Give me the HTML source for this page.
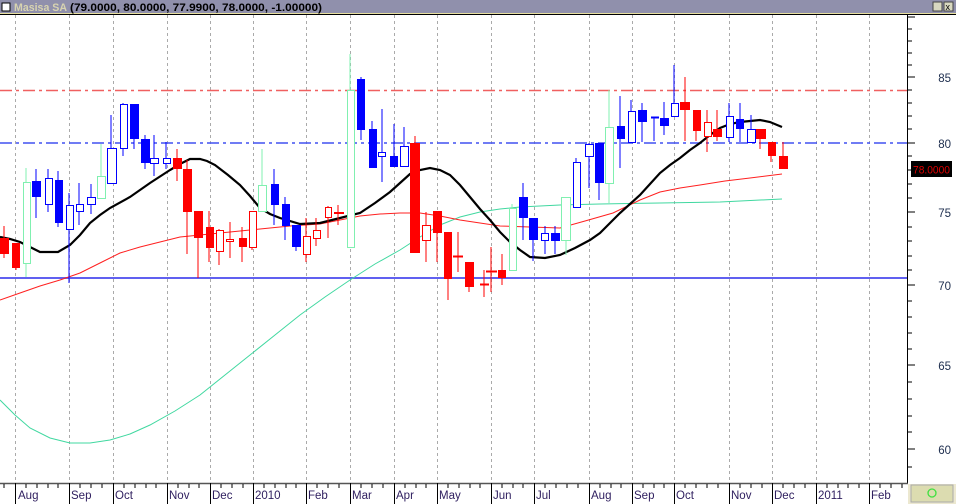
<!DOCTYPE html>
<html><head><meta charset="utf-8"><style>
html,body{margin:0;padding:0;width:956px;height:504px;overflow:hidden;background:#fff;font-family:"Liberation Sans",sans-serif}
svg{display:block}
.b{fill:#0000ff;stroke:#0000ff}.bh{fill:#fff;stroke:#0000ff}
.r{fill:#ff0000;stroke:#ff0000}.rh{fill:#fff;stroke:#ff0000}
.g{fill:#fff;stroke:#80f0b0}
.wb{stroke:#0000ff}.wr{stroke:#ff0000}.wg{stroke:#80f0b0}
text{font-family:"Liberation Sans",sans-serif}
</style></head><body>
<svg width="956" height="504" viewBox="0 0 956 504" xmlns="http://www.w3.org/2000/svg">
<rect x="0" y="0" width="956" height="13" fill="#9090ac"/>
<rect x="0" y="13" width="956" height="1" fill="#e8e0a0"/>
<rect x="0" y="14" width="956" height="1" fill="#000"/>
<rect x="2" y="3" width="8" height="8" fill="#fff" stroke="#000" stroke-width="1"/>
<text x="14" y="11" font-size="11" font-weight="bold" fill="#d8d4b0" textLength="53" lengthAdjust="spacingAndGlyphs">Masisa SA</text>
<text x="70" y="11" font-size="11" font-weight="bold" fill="#000" textLength="252" lengthAdjust="spacingAndGlyphs">(79.0000, 80.0000, 77.9900, 78.0000, -1.00000)</text>
<rect x="933" y="2" width="9" height="9" fill="#d8d8c0" stroke="#444"/>
<rect x="944" y="2" width="9" height="9" fill="#d8d8c0" stroke="#444"/>
<text x="945.5" y="10" font-size="9" fill="#000">x</text>
<g stroke="#aaa" stroke-dasharray="3,3" stroke-width="1">
<line x1="15.5" y1="15" x2="15.5" y2="483"/><line x1="69.5" y1="15" x2="69.5" y2="483"/><line x1="113.5" y1="15" x2="113.5" y2="483"/><line x1="167.5" y1="15" x2="167.5" y2="483"/><line x1="210.5" y1="15" x2="210.5" y2="483"/><line x1="253.5" y1="15" x2="253.5" y2="483"/><line x1="306.5" y1="15" x2="306.5" y2="483"/><line x1="350.5" y1="15" x2="350.5" y2="483"/><line x1="394.5" y1="15" x2="394.5" y2="483"/><line x1="437.5" y1="15" x2="437.5" y2="483"/><line x1="491.5" y1="15" x2="491.5" y2="483"/><line x1="534.5" y1="15" x2="534.5" y2="483"/><line x1="589.5" y1="15" x2="589.5" y2="483"/><line x1="632.5" y1="15" x2="632.5" y2="483"/><line x1="674.5" y1="15" x2="674.5" y2="483"/><line x1="729.5" y1="15" x2="729.5" y2="483"/><line x1="772.5" y1="15" x2="772.5" y2="483"/><line x1="816.5" y1="15" x2="816.5" y2="483"/><line x1="869.5" y1="15" x2="869.5" y2="483"/>
</g>
<line x1="0" y1="90.5" x2="907" y2="90.5" stroke="#f06060" stroke-width="1.5" stroke-dasharray="12,4,3,4"/>
<line x1="0" y1="143" x2="907" y2="143" stroke="#4050f0" stroke-width="1.5" stroke-dasharray="12,4,3,4"/>
<line x1="0" y1="278" x2="907" y2="278" stroke="#6060f0" stroke-width="2"/>
<polyline fill="none" stroke="#40d8a0" stroke-width="1" points="0,400 15,415 30,428 50,438 70,443 90,443 110,440 130,434 150,425 175,411 200,395 225,375 250,355 275,335 300,315 325,297 350,280 375,264 400,250 420,237 440,225 460,217 480,212 500,209 520,207 560,205 600,204 660,203 720,202 782,199"/>
<polyline fill="none" stroke="#ff2020" stroke-width="1" points="0,300 20,293 40,286 60,280 80,273 100,263 120,253 140,247 160,242 180,237 200,235 230,232 260,229 290,226 320,224 340,220 360,216 380,214 400,213 420,213 440,216 460,220 480,223 500,226 530,227 560,228 585,221 613,213 640,200 660,192 680,188 700,185 725,181 750,178 782,174"/>
<polyline fill="none" stroke="#000" stroke-width="2.2" points="0,237 10,239 20,242 30,247 40,252 58,252 70,245 80,235 90,223 100,215 110,208 130,197 150,183 170,170 180,164 190,159 200,159 207,161 215,165 228,175 240,185 250,196 260,208 270,214 280,218 300,224 320,223 340,218 360,213 375,203 390,192 400,183 410,174 420,170 430,168 440,170 450,175 460,185 470,197 480,209 490,220 500,232 510,242 520,250 530,257 545,258 560,255 575,248 590,240 600,233 610,223 620,213 630,204 640,195 650,184 660,173 670,165 680,158 690,150 700,143 710,135 720,128 730,124 740,122 760,120 770,122 782,127"/>
<g stroke-width="1">
<line class="wr" x1="4" y1="226" x2="4" y2="258"/><rect class="r" x="0.5" y="238.5" width="8" height="15"/>
<line class="wr" x1="16" y1="243" x2="16" y2="270"/><rect class="r" x="12.5" y="243.5" width="7" height="24"/>
<line class="wg" x1="26" y1="168" x2="26" y2="277"/><rect class="g" x="23.5" y="182.5" width="7" height="81"/>
<line class="wb" x1="36" y1="169" x2="36" y2="218"/><rect class="b" x="32.5" y="181.5" width="8" height="15"/>
<line class="wb" x1="48" y1="169" x2="48" y2="212"/><rect class="bh" x="45.5" y="178.5" width="7" height="26"/>
<line class="wb" x1="58" y1="171" x2="58" y2="227"/><rect class="b" x="55.5" y="180.5" width="7" height="42"/>
<line class="wb" x1="69" y1="193" x2="69" y2="283"/><rect class="bh" x="66.5" y="205.5" width="7" height="24"/>
<line class="wb" x1="79" y1="183" x2="79" y2="225"/><rect class="bh" x="76.5" y="204.5" width="7" height="7"/>
<line class="wb" x1="91" y1="184" x2="91" y2="214"/><rect class="bh" x="87.5" y="197.5" width="8" height="7"/>
<line class="wg" x1="101" y1="144" x2="101" y2="198"/><rect class="g" x="97.5" y="176.5" width="8" height="22"/>
<line class="wb" x1="111" y1="115" x2="111" y2="183"/><rect class="bh" x="107.5" y="148.5" width="9" height="35"/>
<line class="wb" x1="123" y1="103" x2="123" y2="156"/><rect class="bh" x="120.5" y="104.5" width="7" height="44"/>
<line class="wb" x1="134" y1="104" x2="134" y2="149"/><rect class="b" x="130.5" y="104.5" width="8" height="34"/>
<line class="wb" x1="145" y1="135" x2="145" y2="169"/><rect class="b" x="141.5" y="139.5" width="8" height="23"/>
<line class="wb" x1="154" y1="135" x2="154" y2="176"/><rect class="bh" x="150.5" y="158.5" width="8" height="5"/>
<line class="wb" x1="166" y1="142" x2="166" y2="169"/><rect class="bh" x="163.5" y="158.5" width="7" height="5"/>
<line class="wr" x1="177" y1="149" x2="177" y2="181"/><rect class="r" x="173.5" y="158.5" width="8" height="10"/>
<line class="wr" x1="187" y1="160" x2="187" y2="254"/><rect class="r" x="183.5" y="169.5" width="8" height="42"/>
<line class="wr" x1="198" y1="211" x2="198" y2="278"/><rect class="r" x="194.5" y="211.5" width="8" height="26"/>
<line class="wr" x1="209" y1="211" x2="209" y2="262"/><rect class="r" x="206.5" y="227.5" width="7" height="20"/>
<line class="wr" x1="219" y1="229" x2="219" y2="265"/><rect class="rh" x="216.5" y="230.5" width="7" height="21"/>
<line class="wr" x1="230" y1="222" x2="230" y2="258"/><rect class="rh" x="226.5" y="239.5" width="7" height="2"/>
<line class="wr" x1="242" y1="227" x2="242" y2="262"/><rect class="r" x="239.5" y="238.5" width="7" height="8"/>
<line class="wr" x1="252" y1="211" x2="252" y2="250"/><rect class="rh" x="249.5" y="211.5" width="7" height="36"/>
<line class="wg" x1="262" y1="149" x2="262" y2="212"/><rect class="g" x="258.5" y="185.5" width="8" height="26"/>
<line class="wb" x1="274" y1="169" x2="274" y2="225"/><rect class="b" x="271.5" y="184.5" width="7" height="20"/>
<line class="wb" x1="285" y1="197" x2="285" y2="240"/><rect class="b" x="282.5" y="204.5" width="7" height="21"/>
<line class="wb" x1="296" y1="225" x2="296" y2="251"/><rect class="b" x="292.5" y="225.5" width="8" height="21"/>
<line class="wr" x1="306" y1="218" x2="306" y2="262"/><rect class="rh" x="303.5" y="236.5" width="7" height="18"/>
<line class="wr" x1="316" y1="218" x2="316" y2="246"/><rect class="rh" x="313.5" y="230.5" width="7" height="8"/>
<line class="wr" x1="328" y1="206" x2="328" y2="238"/><rect class="rh" x="325.5" y="207.5" width="6" height="10"/>
<line class="wr" x1="338" y1="205" x2="338" y2="225"/><rect class="r" x="334.5" y="212.5" width="9" height="1"/>
<line class="wg" x1="350" y1="54" x2="350" y2="247"/><rect class="g" x="347.5" y="90.5" width="7" height="157"/>
<line class="wb" x1="361" y1="77" x2="361" y2="140"/><rect class="b" x="357.5" y="79.5" width="7" height="50"/>
<line class="wb" x1="372" y1="121" x2="372" y2="167"/><rect class="b" x="369.5" y="129.5" width="7" height="38"/>
<line class="wb" x1="382" y1="109" x2="382" y2="182"/><rect class="bh" x="378.5" y="152.5" width="7" height="4"/>
<line class="wb" x1="394" y1="124" x2="394" y2="166"/><rect class="b" x="390.5" y="156.5" width="7" height="10"/>
<line class="wb" x1="404" y1="127" x2="404" y2="166"/><rect class="bh" x="400.5" y="146.5" width="8" height="20"/>
<line class="wr" x1="415" y1="136" x2="415" y2="253"/><rect class="r" x="410.5" y="143.5" width="9" height="109"/>
<line class="wr" x1="426" y1="212" x2="426" y2="262"/><rect class="rh" x="422.5" y="225.5" width="8" height="15"/>
<line class="wr" x1="437" y1="211" x2="437" y2="262"/><rect class="r" x="433.5" y="211.5" width="8" height="21"/>
<line class="wr" x1="448" y1="232" x2="448" y2="300"/><rect class="r" x="444.5" y="232.5" width="7" height="46"/>
<line class="wr" x1="458" y1="232" x2="458" y2="272"/><rect class="r" x="453.5" y="256" width="9" height="1"/>
<line class="wr" x1="469" y1="262" x2="469" y2="292"/><rect class="r" x="465.5" y="262.5" width="8" height="24"/>
<line class="wr" x1="484" y1="270" x2="484" y2="297"/><rect class="r" x="480.5" y="284" width="8" height="1"/>
<line class="wr" x1="491" y1="247" x2="491" y2="292"/><rect class="r" x="486.5" y="271" width="10" height="1"/>
<line class="wr" x1="502" y1="254" x2="502" y2="285"/><rect class="r" x="498.5" y="270.5" width="7" height="7"/>
<line class="wg" x1="512" y1="204" x2="512" y2="270"/><rect class="g" x="509.5" y="208.5" width="7" height="62"/>
<line class="wb" x1="523" y1="183" x2="523" y2="240"/><rect class="b" x="519.5" y="197.5" width="8" height="20"/>
<line class="wb" x1="533" y1="218" x2="533" y2="261"/><rect class="b" x="529.5" y="218.5" width="8" height="21"/>
<line class="wb" x1="545" y1="226" x2="545" y2="254"/><rect class="bh" x="541.5" y="233.5" width="7" height="7"/>
<line class="wb" x1="555" y1="226" x2="555" y2="254"/><rect class="b" x="551.5" y="233.5" width="8" height="7"/>
<line class="wg" x1="566" y1="197" x2="566" y2="255"/><rect class="g" x="561.5" y="197.5" width="9" height="43"/>
<line class="wb" x1="576" y1="158" x2="576" y2="207"/><rect class="bh" x="573.5" y="162.5" width="7" height="45"/>
<line class="wb" x1="589" y1="143" x2="589" y2="188"/><rect class="bh" x="585.5" y="144.5" width="8" height="12"/>
<line class="wb" x1="599" y1="143" x2="599" y2="200"/><rect class="b" x="595.5" y="143.5" width="8" height="39"/>
<line class="wg" x1="609" y1="90" x2="609" y2="203"/><rect class="g" x="605.5" y="127.5" width="8" height="56"/>
<line class="wb" x1="620" y1="96" x2="620" y2="168"/><rect class="b" x="617.5" y="126.5" width="7" height="12"/>
<line class="wb" x1="631" y1="100" x2="631" y2="142"/><rect class="bh" x="628.5" y="111.5" width="7" height="31"/>
<line class="wb" x1="642" y1="103" x2="642" y2="142"/><rect class="b" x="638.5" y="110.5" width="8" height="11"/>
<line class="wb" x1="654" y1="117" x2="654" y2="141"/><rect class="b" x="651.5" y="117" width="7" height="1"/>
<line class="wb" x1="664" y1="102" x2="664" y2="135"/><rect class="b" x="660.5" y="118.5" width="8" height="7"/>
<line class="wb" x1="674" y1="65" x2="674" y2="116"/><rect class="bh" x="671.5" y="103.5" width="7" height="13"/>
<line class="wr" x1="685" y1="77" x2="685" y2="141"/><rect class="r" x="680.5" y="102.5" width="9" height="7"/>
<line class="wr" x1="696" y1="110" x2="696" y2="141"/><rect class="r" x="693.5" y="110.5" width="7" height="20"/>
<line class="wr" x1="707" y1="110" x2="707" y2="152"/><rect class="rh" x="704.5" y="122.5" width="7" height="14"/>
<line class="wr" x1="717" y1="110" x2="717" y2="141"/><rect class="r" x="713.5" y="129.5" width="8" height="7"/>
<line class="wb" x1="729" y1="103" x2="729" y2="142"/><rect class="bh" x="726.5" y="116.5" width="7" height="21"/>
<line class="wb" x1="740" y1="103" x2="740" y2="142"/><rect class="b" x="736.5" y="119.5" width="7" height="9"/>
<line class="wb" x1="751" y1="115" x2="751" y2="142"/><rect class="bh" x="747.5" y="129.5" width="8" height="13"/>
<line class="wr" x1="760" y1="129" x2="760" y2="149"/><rect class="r" x="756.5" y="129.5" width="9" height="9"/>
<line class="wr" x1="771" y1="142" x2="771" y2="162"/><rect class="r" x="768.5" y="142.5" width="7" height="13"/>
<line class="wr" x1="783" y1="142" x2="783" y2="168"/><rect class="r" x="779.5" y="156.5" width="8" height="12"/>
</g>
<rect x="908" y="15" width="48" height="469" fill="#fff"/>
<line x1="907.5" y1="15" x2="907.5" y2="484" stroke="#000"/>
<g stroke="#000">
<line x1="908" y1="17" x2="915" y2="17"/><line x1="908" y1="29" x2="912" y2="29"/><line x1="908" y1="41" x2="912" y2="41"/><line x1="908" y1="53" x2="912" y2="53"/><line x1="908" y1="65" x2="912" y2="65"/><line x1="908" y1="77" x2="915" y2="77"/><line x1="908" y1="90" x2="912" y2="90"/><line x1="908" y1="103" x2="912" y2="103"/><line x1="908" y1="116" x2="912" y2="116"/><line x1="908" y1="129" x2="912" y2="129"/><line x1="908" y1="143" x2="915" y2="143"/><line x1="908" y1="156" x2="912" y2="156"/><line x1="908" y1="170" x2="912" y2="170"/><line x1="908" y1="184" x2="912" y2="184"/><line x1="908" y1="198" x2="912" y2="198"/><line x1="908" y1="212" x2="915" y2="212"/><line x1="908" y1="227" x2="912" y2="227"/><line x1="908" y1="241" x2="912" y2="241"/><line x1="908" y1="256" x2="912" y2="256"/><line x1="908" y1="270" x2="912" y2="270"/><line x1="908" y1="285" x2="915" y2="285"/><line x1="908" y1="301" x2="912" y2="301"/><line x1="908" y1="317" x2="912" y2="317"/><line x1="908" y1="333" x2="912" y2="333"/><line x1="908" y1="349" x2="912" y2="349"/><line x1="908" y1="365" x2="915" y2="365"/><line x1="908" y1="382" x2="912" y2="382"/><line x1="908" y1="399" x2="912" y2="399"/><line x1="908" y1="416" x2="912" y2="416"/><line x1="908" y1="432" x2="912" y2="432"/><line x1="908" y1="449" x2="915" y2="449"/><line x1="908" y1="467" x2="912" y2="467"/>
</g>
<g font-size="11.5" fill="#203050" text-anchor="end">
<text x="951" y="82">85</text><text x="951" y="148">80</text><text x="951" y="217">75</text><text x="951" y="290">70</text><text x="951" y="370">65</text><text x="951" y="454">60</text>
</g>
<rect x="911" y="161" width="41" height="16" fill="#000"/>
<text x="913" y="173.5" font-size="11" fill="#e00000" textLength="37" lengthAdjust="spacingAndGlyphs">78.0000</text>
<rect x="0" y="484" width="908" height="20" fill="#fff"/>
<line x1="0" y1="483.5" x2="908" y2="483.5" stroke="#555" stroke-width="1.5"/>
<g stroke="#000">
<line x1="15.5" y1="483" x2="15.5" y2="504"/><line x1="69.5" y1="483" x2="69.5" y2="504"/><line x1="113.5" y1="483" x2="113.5" y2="504"/><line x1="167.5" y1="483" x2="167.5" y2="504"/><line x1="210.5" y1="483" x2="210.5" y2="504"/><line x1="253.5" y1="483" x2="253.5" y2="504"/><line x1="306.5" y1="483" x2="306.5" y2="504"/><line x1="350.5" y1="483" x2="350.5" y2="504"/><line x1="394.5" y1="483" x2="394.5" y2="504"/><line x1="437.5" y1="483" x2="437.5" y2="504"/><line x1="491.5" y1="483" x2="491.5" y2="504"/><line x1="534.5" y1="483" x2="534.5" y2="504"/><line x1="589.5" y1="483" x2="589.5" y2="504"/><line x1="632.5" y1="483" x2="632.5" y2="504"/><line x1="674.5" y1="483" x2="674.5" y2="504"/><line x1="729.5" y1="483" x2="729.5" y2="504"/><line x1="772.5" y1="483" x2="772.5" y2="504"/><line x1="816.5" y1="483" x2="816.5" y2="504"/><line x1="869.5" y1="483" x2="869.5" y2="504"/>
</g>
<path d="M4,484v4M26,484v4M37,484v4M48,484v4M58,484v4M80,484v4M91,484v4M102,484v4M124,484v4M135,484v4M146,484v4M156,484v4M178,484v4M189,484v4M199,484v4M221,484v4M232,484v4M243,484v4M264,484v4M275,484v4M286,484v4M296,484v4M317,484v4M328,484v4M339,484v4M361,484v4M372,484v4M383,484v4M405,484v4M416,484v4M426,484v4M448,484v4M459,484v4M470,484v4M480,484v4M502,484v4M513,484v4M523,484v4M545,484v4M556,484v4M567,484v4M578,484v4M600,484v4M611,484v4M621,484v4M643,484v4M654,484v4M664,484v4M685,484v4M696,484v4M707,484v4M718,484v4M740,484v4M751,484v4M762,484v4M783,484v4M794,484v4M805,484v4M827,484v4M838,484v4M848,484v4M859,484v4M880,484v4M891,484v4M902,484v4" stroke="#000"/>
<g font-size="11.5" fill="#302060">
<text x="18" y="499">Aug</text><text x="71" y="499">Sep</text><text x="115" y="499">Oct</text><text x="169" y="499">Nov</text><text x="212" y="499">Dec</text><text x="255" y="499">2010</text><text x="308" y="499">Feb</text><text x="352" y="499">Mar</text><text x="396" y="499">Apr</text><text x="439" y="499">May</text><text x="493" y="499">Jun</text><text x="536" y="499">Jul</text><text x="591" y="499">Aug</text><text x="634" y="499">Sep</text><text x="676" y="499">Oct</text><text x="731" y="499">Nov</text><text x="774" y="499">Dec</text><text x="818" y="499">2011</text><text x="871" y="499">Feb</text>
</g>
<rect x="908" y="484" width="48" height="20" fill="#ece8d0"/>
<rect x="911" y="485" width="42" height="17" fill="#dcdcb0" stroke="#aaa"/>
<circle cx="932" cy="493" r="4" fill="none" stroke="#40e040" stroke-width="1.3"/>
</svg>
</body></html>
